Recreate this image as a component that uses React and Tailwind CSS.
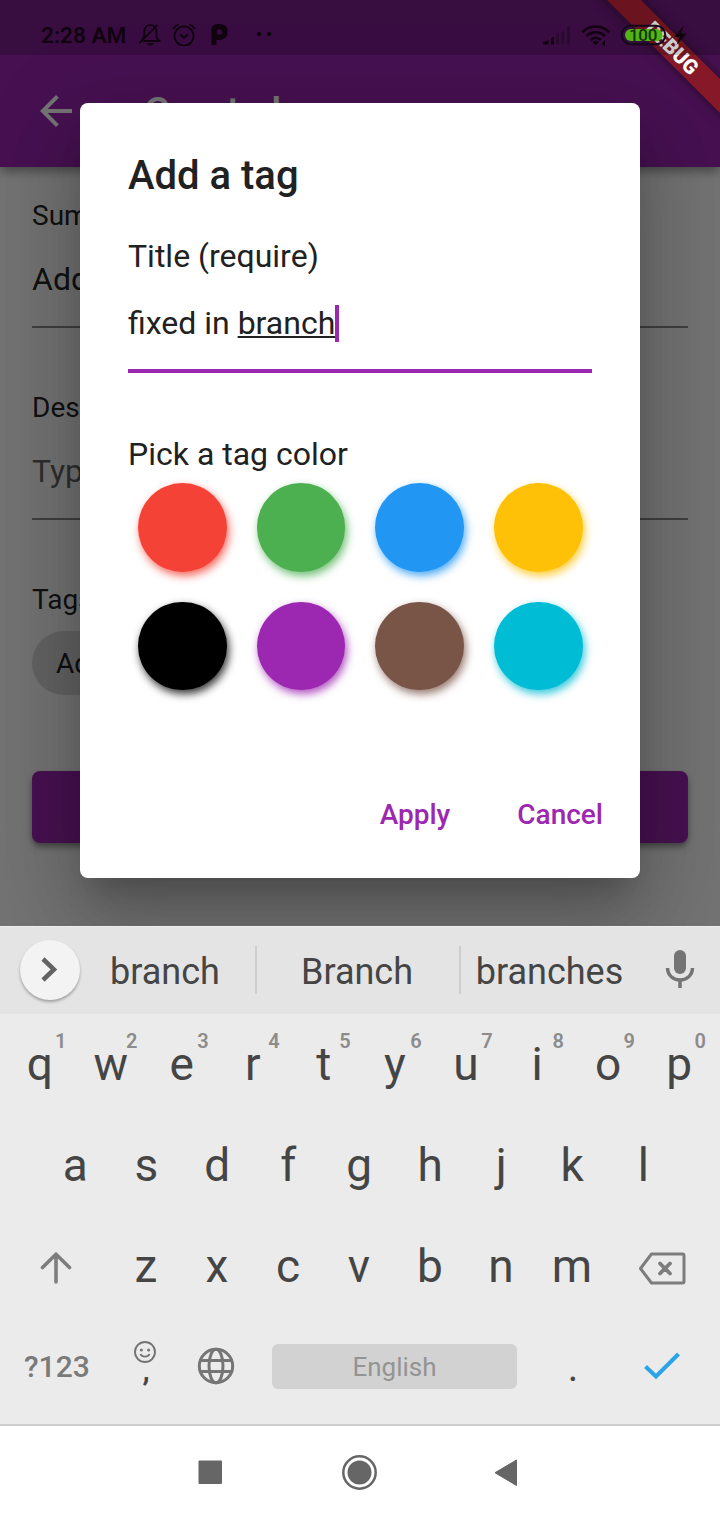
import React from 'react';
import { MdArrowBack } from 'react-icons/md';

function StatusIcons() {
  return (
    <>
      <svg className="ml-[11px] h-6 w-6" viewBox="0 0 24 24" fill="none" stroke="currentColor" strokeWidth="1.8">
        <path d="M5.500 19H21.500L18.500 15.500V9.800C18.500 6 16.200 3.200 12.300 3.200C8.400 3.200 6.300 6 6.300 9.800V14.500L4 17.500" />
        <path d="M1.500 21L19.500 2.800" />
        <path d="M8.500 21.300H16C15 24 9.500 24 8.500 21.300Z" fill="currentColor" stroke="none" />
      </svg>
      <svg className="ml-2.5 h-6 w-6" viewBox="0 0 24 24" fill="none" stroke="currentColor" strokeWidth="1.9">
        <circle cx="12" cy="14" r="9.6" />
        <path d="M1.200 7C2.500 4.800 4 3.400 6.500 2.400M22.800 7C21.500 4.800 20 3.400 17.500 2.400M8 12.300L12 15.700L16 12.300" />
      </svg>
      <svg className="ml-3.5 h-6 w-5" viewBox="0 0 20 24">
        <path
          fill="currentColor"
          fillRule="evenodd"
          d="M1.500 23V8C1.500 4 4 2 8.500 2H9.500C14.500 2 17.800 5 17.800 9.800C17.800 14.600 14.500 18 9.500 18H6.500V23ZM9.500 7.300A2.700 2.700 0 1 0 9.500 12.700A2.700 2.700 0 1 0 9.500 7.300Z"
        />
      </svg>
      <svg className="ml-[27px] h-6 w-5" viewBox="0 0 20 24">
        <circle cx="2" cy="12" r="2" />
        <circle cx="12" cy="12" r="2" />
      </svg>
    </>
  );
}

function StatusBar() {
  return (
    <div className="absolute inset-x-0 top-0 flex h-[55px] items-start bg-black/20 pl-[41px] pt-[22px] text-[#10030f]">
      <span className="w-[86px] whitespace-nowrap pt-px text-[22.600px] font-semibold leading-[26px]">2:28 AM</span>
      <div className="flex">
        <StatusIcons />
      </div>
      <svg className="ml-auto h-6 w-[146px] shrink-0" viewBox="542 22 146 24">
        <path d="M543 44.500V42.500L548.500 40V44.500ZM551 44.500V38.500L554 36.500V44.500Z" fill="#10030f" />
        <path d="M556 34.500L559 33V44.500H556ZM561.500 32L564 30.500V44.500H561.500ZM567 28L570 26V44.500H567Z" fill="#280a2f" />
        <g fill="none" stroke="#10030f" strokeWidth="2.600">
          <path d="M582.500 32.300C589.500 24.600 602 24.600 609 32.300" />
          <path d="M586.500 36.200C591.500 30.900 600 30.900 605 36.200" />
          <path d="M590.700 40C593.800 37 597.800 37 600.800 40" />
        </g>
        <path d="M592.500 42C594.500 40.800 597 40.800 599 42L595.800 45.200ZM602 43.500L605 40V46.500H604Z" fill="#10030f" />
        <rect x="621.700" y="25.700" width="43.600" height="18.600" rx="9.300" fill="none" stroke="#14091a" strokeWidth="2" />
        <rect x="625" y="29" width="37.500" height="12" rx="6" fill="#51b414" />
        <text x="643" y="41" textAnchor="middle" fontSize="17" fontWeight="500" letterSpacing="-0.300" fontFamily="Roboto, sans-serif" fill="#123405">100</text>
        <path d="M684 25.500L674 37H679.500L676.500 45L686.500 33.500H681Z" fill="#10030f" />
      </svg>
      <div className="w-[32px] shrink-0" />
    </div>
  );
}

function DebugBanner() {
  return (
    <div className="absolute right-0 top-0 h-[130px] w-[130px] overflow-hidden">
      <div className="absolute left-[-18px] top-[36px] flex h-6 w-[200px] rotate-45 items-center justify-center bg-[#861827] text-[20.400px] font-black leading-none text-white shadow-[0_0_12px_rgba(0,0,0,0.5)]">
        DEBUG
      </div>
    </div>
  );
}

function Page() {
  return (
    <div className="h-full bg-[#fafafa] text-black/87">
      <header className="relative flex h-[167px] items-center bg-[#9c27b0] pl-8 pt-[55px] text-white shadow-[0_4px_10px_rgba(0,0,0,0.4)]">
        <MdArrowBack className="h-12 w-12" />
        <h1 className="ml-16 pt-[3px] text-[40px] font-medium leading-[56px]">Create bug</h1>
      </header>
      <main className="px-8 pt-[30px]">
        <label className="block h-[38px] text-[28px] leading-[38px]">Summary (require)</label>
        <div className="mt-[25px] h-[68px] border-b-2 border-black/45 text-[32px] leading-[38px]">Add tags</div>
        <label className="mt-[61px] block h-[38px] text-[28px] leading-[38px]">Description</label>
        <div className="mt-[25px] h-[68px] border-b-2 border-black/45 text-[32px] leading-[38px] text-black/60">Type here</div>
        <label className="mt-[61px] block h-[38px] text-[28px] leading-[38px]">Tags</label>
        <div className="mt-[12px] flex h-16 w-[150px] items-center rounded-full bg-[#d8d8d8] pl-6 pt-0.5 text-[28px]">Add tag</div>
        <div className="mt-[76px] h-[72px] rounded-lg bg-[#9c27b0] shadow-[0_4px_6px_rgba(0,0,0,0.4)]" />
      </main>
    </div>
  );
}

const swatches = [
  'bg-[#f44336] shadow-[2px_4px_9px_rgba(244,67,54,0.8)]',
  'bg-[#4caf50] shadow-[2px_4px_9px_rgba(76,175,80,0.8)]',
  'bg-[#2196f3] shadow-[2px_4px_9px_rgba(33,150,243,0.8)]',
  'bg-[#ffc107] shadow-[2px_4px_9px_rgba(255,193,7,0.8)]',
  'bg-black shadow-[2px_4px_9px_rgba(0,0,0,0.8)]',
  'bg-[#9c27b0] shadow-[2px_4px_9px_rgba(156,39,176,0.8)]',
  'bg-[#795548] shadow-[2px_4px_9px_rgba(121,85,72,0.8)]',
  'bg-[#00bcd4] shadow-[2px_4px_9px_rgba(0,188,212,0.8)]',
];

function TagDialog() {
  return (
    <div className="absolute left-20 top-[103px] flex h-[775px] w-[560px] flex-col rounded-lg bg-white px-12 pt-[49px] text-[#212121] shadow-[0_22px_30px_-14px_rgba(0,0,0,0.2),0_48px_76px_6px_rgba(0,0,0,0.14),0_18px_92px_16px_rgba(0,0,0,0.12)]">
      <h2 className="h-12 text-[40px] font-medium leading-[48px]">Add a tag</h2>
      <div className="mt-[37px] h-[38px] text-[32px] leading-[38px]">Title (require)</div>
      <div className="mt-[29px] flex h-[69px] border-b-4 border-[#9c27b0] text-[32px] leading-[38px]">
        <span className="whitespace-pre">fixed in </span>
        <span className="underline decoration-[1.500px] underline-offset-[2px]">branch</span>
        <span className="mt-px h-[37px] w-1 bg-[#9c27b0]" />
      </div>
      <div className="mt-[62px] h-[38px] text-[32px] leading-[38px]">Pick a tag color</div>
      <div className="ml-2.5 mt-[10px] grid w-[444.700px] grid-cols-4 gap-[30px]">
        {swatches.map((s) => (
          <div key={s} className={`aspect-square rounded-full ${s}`} />
        ))}
      </div>
      <div className="-mr-[11px] mt-[105px] flex justify-end gap-[67px] text-[28px] font-medium leading-[40px] text-[#9c27b0]">
        <span>Apply</span>
        <span>Cancel</span>
      </div>
    </div>
  );
}

const Key = ({ children }) => <span className="w-[71px] shrink-0 text-center">{children}</span>;

function Keyboard() {
  return (
    <section className="flex h-[498px] flex-col bg-[#ebebeb] text-[#454545]">
      <div className="flex h-[88px] shrink-0 items-center border-t border-[#eeeeee] bg-[#e4e4e4] pb-[2px] pl-5 text-[36px]">
        <div className="flex h-[60px] w-[60px] items-center justify-center rounded-full bg-[#f3f3f3] shadow-[0_2px_3px_rgba(0,0,0,0.3)]">
          <svg className="mr-1 h-8 w-8" viewBox="0 0 32 32" fill="none" stroke="#636363" strokeWidth="4.500">
            <path d="M11 5L22 15.500L11 26" />
          </svg>
        </div>
        <span className="w-[170px] pt-1 text-center">branch</span>
        <span className="ml-[5px] h-12 w-0.5 shrink-0 bg-[#cecece]" />
        <span className="w-[202px] pr-0.5 pt-1 text-center">Branch</span>
        <span className="h-12 w-0.5 shrink-0 bg-[#cecece]" />
        <span className="w-[179px] pr-0.5 pt-1 text-center">branches</span>
        <svg className="ml-5 h-10 w-[42px]" viewBox="0 0 42 40">
          <rect x="14" y="0" width="12" height="24" rx="6" fill="#747474" />
          <path d="M7.500 18C8 34 32 34 32.500 18M20 30V38" fill="none" stroke="#747474" strokeWidth="3.500" />
        </svg>
      </div>
      <div className="flex h-[101px] shrink-0 pl-[4.200px] pt-[23px] text-[46px] leading-[54px]">
        {'qwertyuiop'.split('').map((c, i) => (
          <span key={c} className="relative w-[71.060px] shrink-0 text-center">
            {c}
            <span className="absolute left-[50.600px] top-[-8px] w-3 text-center text-[20px] font-semibold leading-6 text-[#8c8c8c]">{(i + 1) % 10}</span>
          </span>
        ))}
      </div>
      <div className="flex h-[101px] shrink-0 justify-center pr-[1.500px] pt-[23px] text-[46px] leading-[54px]">
        {'asdfghjkl'.split('').map((c) => (
          <Key key={c}>{c}</Key>
        ))}
      </div>
      <div className="flex h-[101px] shrink-0 pl-10 pt-[23px] text-[46px] leading-[54px]">
        <svg className="mr-[38.500px] mt-[13px] h-8 w-8 shrink-0" viewBox="0 0 32 32" fill="none" stroke="#7d7d7d" strokeWidth="3.600" strokeLinecap="round" strokeLinejoin="round">
          <path d="M16 30V2M2.500 15.500L16 2.200L29.500 15.500" />
        </svg>
        {'zxcvbnm'.split('').map((c) => (
          <Key key={c}>{c}</Key>
        ))}
        <svg className="ml-[31.500px] mt-[12px] h-[34px] w-12 shrink-0" viewBox="0 0 48 34" fill="none" stroke="#7d7d7d" strokeWidth="3" strokeLinejoin="round">
          <path d="M12.500 3H43.500Q45 3 45 4.500V30.500Q45 32 43.500 32H12.500L1.500 17.500Z" />
          <path d="M21 12.500L31 22.500M31 12.500L21 22.500" strokeWidth="3.800" strokeLinecap="round" />
        </svg>
      </div>
      <div className="flex grow items-start pl-6 text-[#7a7a7a]">
        <span className="mt-[30px] w-[66px] whitespace-nowrap text-[30px] font-medium leading-[40px]">?123</span>
        <div className="ml-[43px] mt-[23px] flex w-6 flex-col items-center">
          <svg className="h-6 w-6 shrink-0" viewBox="0 0 24 24" fill="none" stroke="#747474" strokeWidth="1.900">
            <circle cx="12" cy="12" r="10" />
            <path d="M7.500 14C9 17.500 15 17.500 16.500 14" />
            <circle cx="8.400" cy="10" r="1.500" fill="#747474" stroke="none" />
            <circle cx="15.600" cy="10" r="1.500" fill="#747474" stroke="none" />
          </svg>
          <span className="mt-[-13px] pl-0.5 text-[32px] font-medium leading-[38px] text-[#454545]">,</span>
        </div>
        <svg className="ml-10 mt-[30px] h-[38px] w-[38px] shrink-0" viewBox="0 0 38 38" fill="none" stroke="#757575" strokeWidth="3">
          <circle cx="19" cy="19" r="16.700" />
          <ellipse cx="19" cy="19" rx="7" ry="16.700" />
          <path d="M4 13.500H34M4 24.500H34" />
        </svg>
        <div className="ml-[37px] mt-[27px] flex h-[45px] w-[245px] items-center justify-center rounded-md bg-[#d2d2d2] pt-0.5 text-[26px] text-[#949494]">English</div>
        <span className="ml-[50px] mt-[31px] w-3 text-center text-[40px] leading-[40px] text-[#454545]">.</span>
        <svg className="ml-[65px] mt-[34px] h-8 w-9" viewBox="0 0 36 32" fill="none" stroke="#2ba3e8" strokeWidth="4">
          <path d="M1.500 15.500L12 25.500L34.500 3" />
        </svg>
      </div>
    </section>
  );
}

export default function App() {
  return (
    <div className="flex h-[1520px] w-[720px] flex-col overflow-hidden bg-white font-['Roboto',sans-serif]">
      <div className="relative h-[926px] shrink-0 overflow-hidden">
        <Page />
        <div className="absolute inset-0 bg-black/54" />
        <TagDialog />
        <DebugBanner />
        <StatusBar />
      </div>
      <Keyboard />
      <nav className="flex h-24 shrink-0 items-center border-t-2 border-[#cfcfcf] bg-white pb-0.5">
        <svg className="ml-[197px] h-10 w-[324px]" viewBox="197 1452 324 40" fill="#666666">
          <rect x="198.500" y="1460.500" width="23.500" height="23.500" rx="1" />
          <circle cx="359.500" cy="1472.500" r="16.200" fill="none" stroke="#666666" strokeWidth="2.500" />
          <circle cx="359.500" cy="1472.500" r="12" />
          <path d="M516.500 1460V1485.500L495 1472.700Z" stroke="#666666" strokeLinejoin="round" />
        </svg>
      </nav>
    </div>
  );
}
